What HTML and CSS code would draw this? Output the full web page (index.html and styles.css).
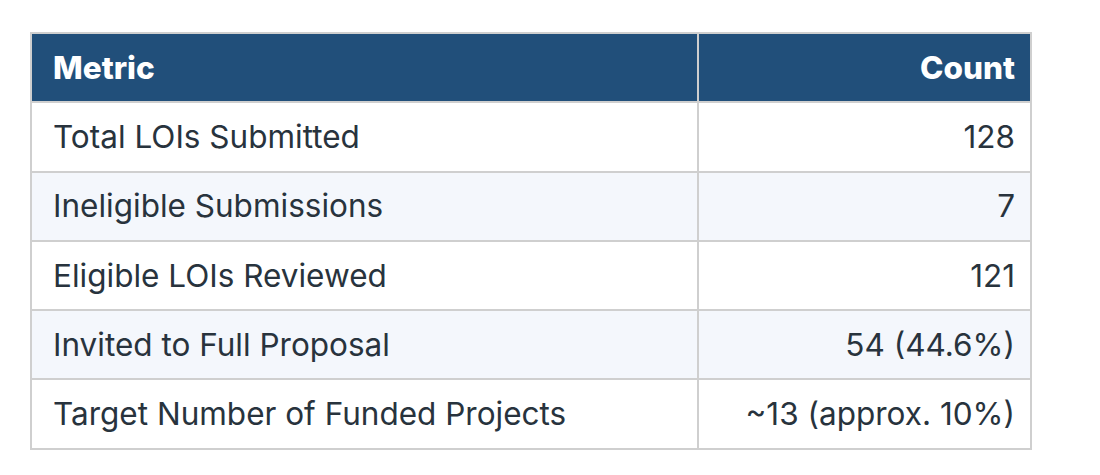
FILE: index.html
```html
<!DOCTYPE html>
<html>
<head>
<meta charset="utf-8">
<link rel="stylesheet" href="styles.css">
</head>
<body>
<div class="wrap">
<table class="metrics">
  <thead>
    <tr><th class="c-metric">Metric</th><th class="c-count">Count</th></tr>
  </thead>
  <tbody>
    <tr><td class="c-metric">Total LOIs Submitted</td><td class="c-count">128</td></tr>
    <tr><td class="c-metric">Ineligible Submissions</td><td class="c-count">7</td></tr>
    <tr><td class="c-metric">Eligible LOIs Reviewed</td><td class="c-count">121</td></tr>
    <tr><td class="c-metric">Invited to Full Proposal</td><td class="c-count">54 (44.6%)</td></tr>
    <tr><td class="c-metric">Target Number of Funded Projects</td><td class="c-count">~13 (approx. 10%)</td></tr>
  </tbody>
</table>
</div>
</body>
</html>
```

FILE: styles.css
```css
html, body {
  margin: 0;
  padding: 0;
  background: #ffffff;
}
.wrap {
  padding: 32px 0 0 30px;
}
.metrics {
  width: 1002px;
  border-collapse: collapse;
  border: 2px solid #cfcfcf;
  font-family: "Inter", "Liberation Sans", sans-serif;
  font-size: 31.5px;
  color: #28333d;
  table-layout: fixed;
}
.metrics th,
.metrics td {
  border: 2px solid #cfcfcf;
  padding: 0 15px 0 21px;
  height: 69.3px;
  line-height: 1.2;
  box-sizing: border-box;
}
.metrics th {
  background: #214f7a;
  color: #ffffff;
  font-weight: 800;
  border-color: #cfcfcf;
}
.metrics .c-metric {
  width: 66.7%;
  text-align: left;
}
.metrics .c-count {
  text-align: right;
}
.metrics tbody tr:nth-child(even) td {
  background: #f4f7fc;
}
```
